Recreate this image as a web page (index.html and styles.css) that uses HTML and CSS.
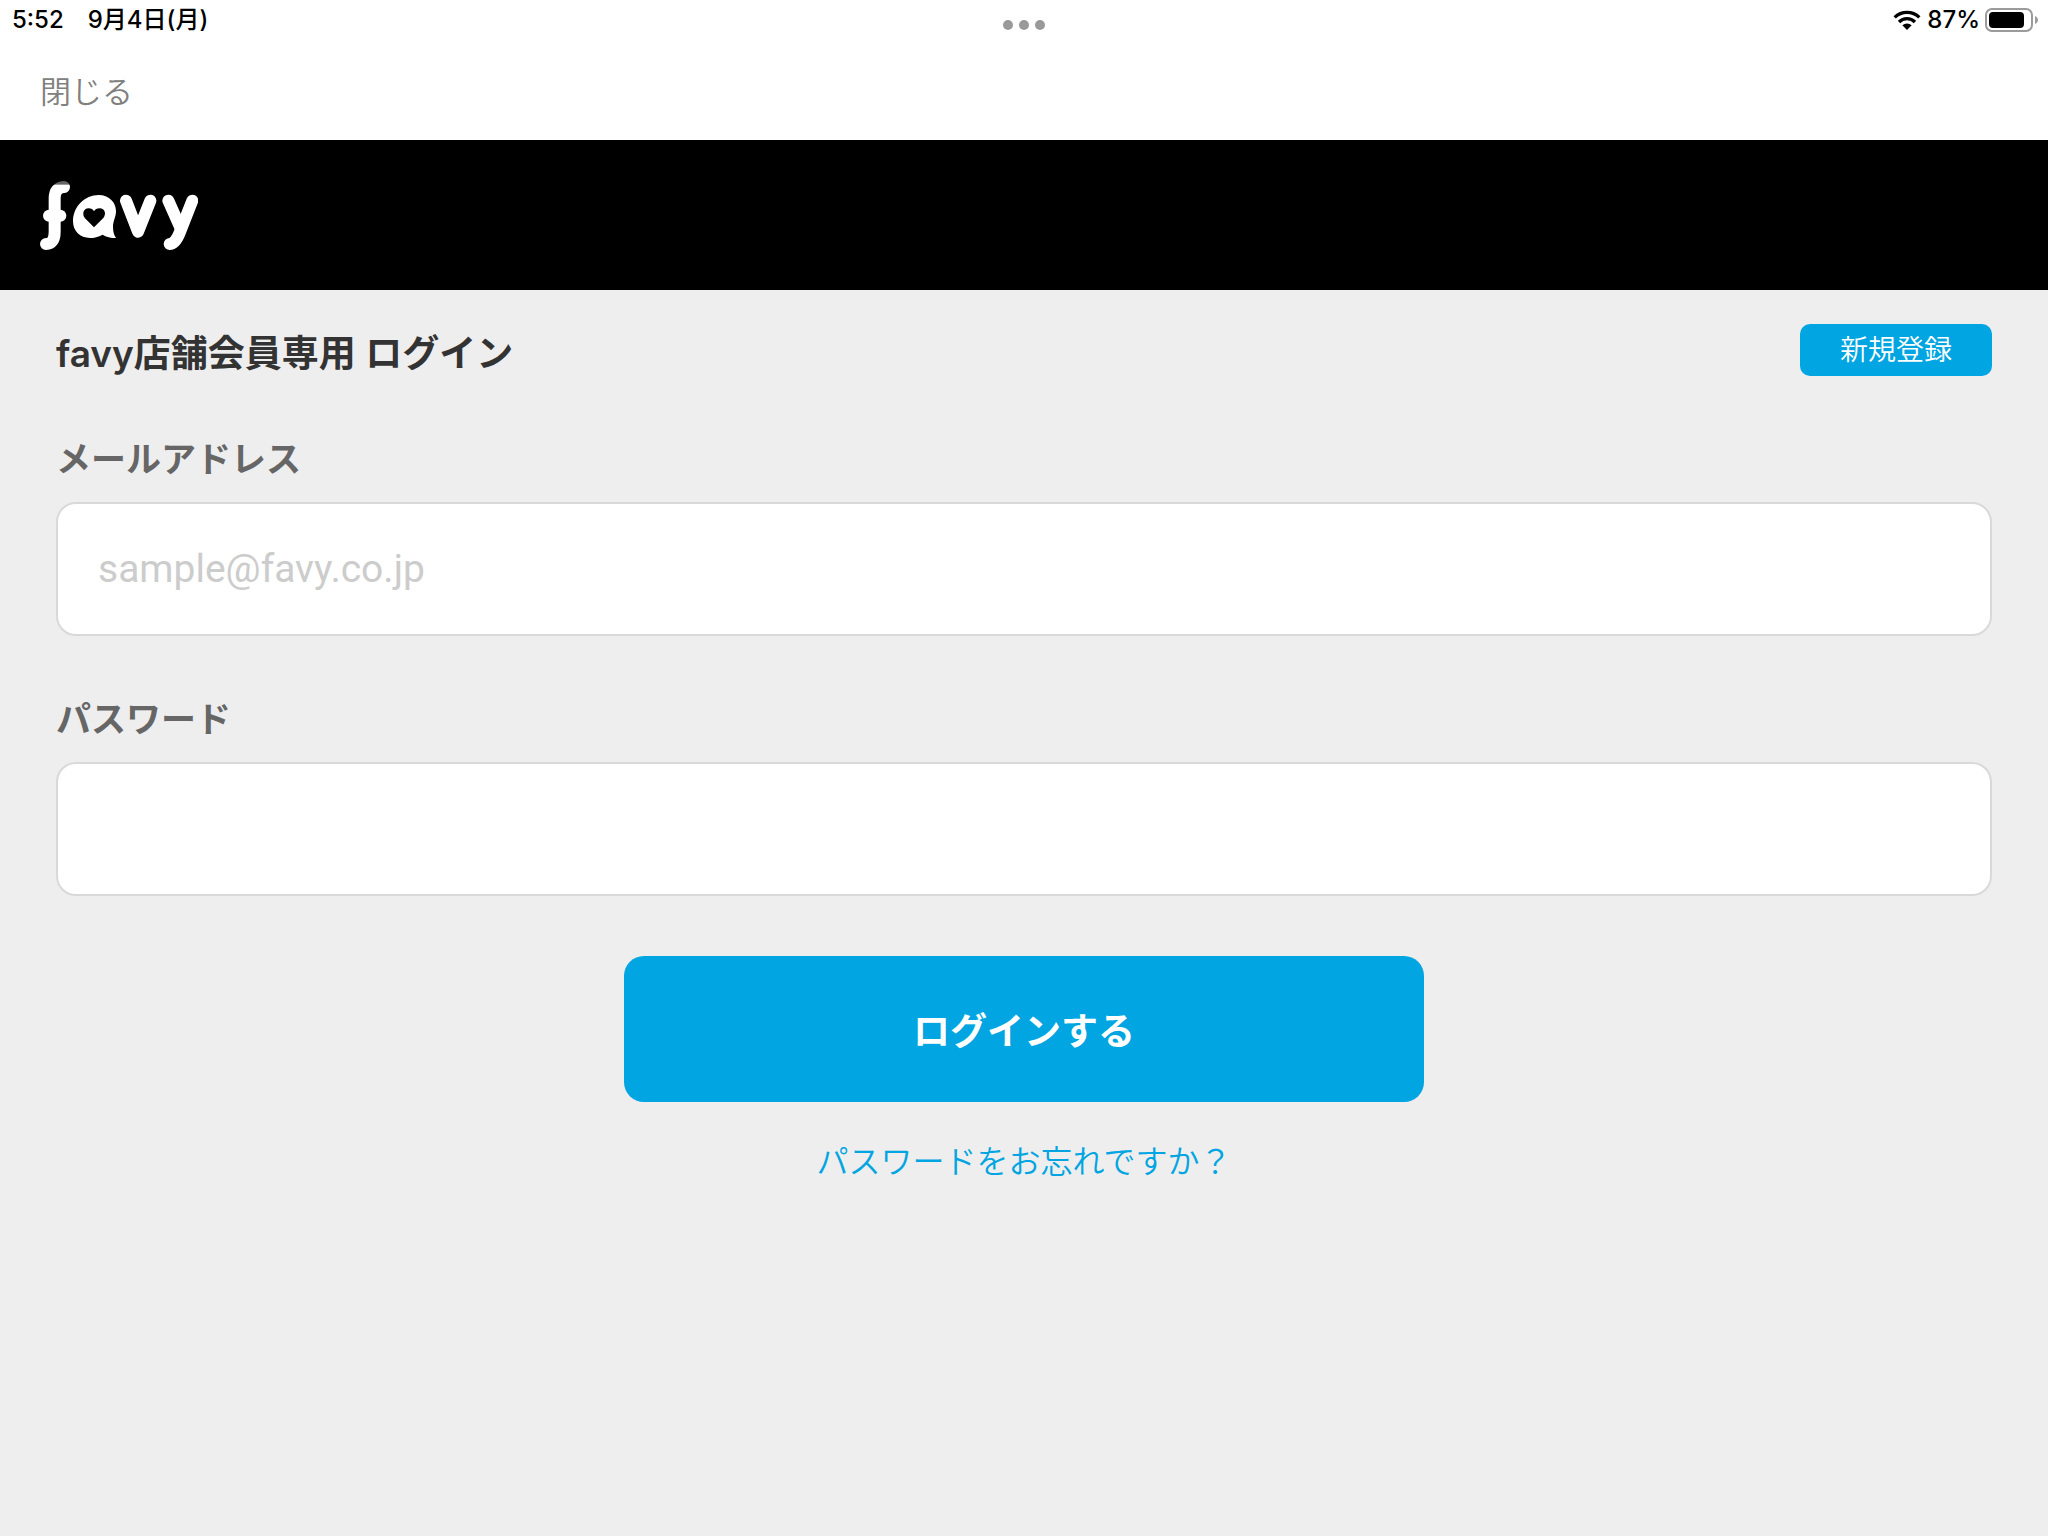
FILE: index.html
```
<!DOCTYPE html>
<html lang="ja">
<head>
    <meta charset="UTF-8">
    <meta name="viewport" content="width=device-width, initial-scale=1.0">
    <title>favy店舗会員専用 ログイン</title>
    <link rel="stylesheet" href="styles.css">
</head>
<body>
    <div class="status-bar">
        <div class="status-left">
            <span>5:52</span>
            <span>9月4日(月)</span>
        </div>
        <div class="status-dots">
            <span class="dot"></span>
            <span class="dot"></span>
            <span class="dot"></span>
        </div>
        <div class="status-right">
            <svg class="wifi" viewBox="0 0 82 60" aria-hidden="true">
                <g fill="none" stroke="#000" stroke-width="10">
                    <path d="M4 22 A53 53 0 0 1 78 22"/>
                    <path d="M17 36 A34 34 0 0 1 65 36"/>
                </g>
                <path d="M41 60 L27 46 A20 20 0 0 1 55 46 Z"/>
            </svg>
            <span>87%</span>
            <svg class="battery" viewBox="0 0 54 24" aria-hidden="true">
                <rect x="2" y="1" width="46" height="22" rx="6" fill="none" stroke="#9b9b9b" stroke-width="2"/>
                <rect x="5" y="4" width="35" height="16" rx="4"/>
                <path d="M51 8 C55 10 55 14 51 16 Z" fill="#9b9b9b"/>
            </svg>
        </div>
    </div>

    <nav class="nav-bar">
        <button type="button" class="close-button">閉じる</button>
    </nav>

    <header class="header">
        <svg class="logo" viewBox="60 60 474 207" role="img" aria-label="favy">
            <g fill="none" stroke="#fff" stroke-width="36" stroke-linecap="round" stroke-linejoin="round">
                <path d="M132 78 Q104 80 104 112 V212 Q104 249 78 249"/>
                <path d="M87 164 H121"/>
                <path d="M318 119 L354 212 L391 119"/>
                <path d="M445 119 L481 200"/>
                <path d="M517 119 L480 213 Q466 249 449 249"/>
            </g>
            <path fill="#fff" d="M236 102 C266 102 288 123 288 150 C288 168 279 180 279 197 C279 212 282 222 288 231 C272 231 258 228 248 221 C235 228 222 231 210 231 C180 231 159 210 159 181 C159 137 194 102 236 102 Z"/>
            <path d="M222 199 L195 172 C186 161 189 142 206 142 C214 142 219 146 222 151 C225 146 231 142 239 142 C255 142 260 160 250 171 Z"/>
            <rect x="60" y="58" width="100" height="13" fill="#000" opacity="0.6"/>
        </svg>
    </header>

    <main class="content">
        <div class="title-row">
            <h1>favy店舗会員専用 ログイン</h1>
            <a href="#" class="register-link">新規登録</a>
        </div>

        <form class="login-form">
            <label for="email">メールアドレス</label>
            <input type="email" id="email" placeholder="sample@favy.co.jp">

            <label for="password">パスワード</label>
            <input type="password" id="password">

            <button type="submit" class="login-button">ログインする</button>
        </form>

        <a href="#" class="forgot-link">パスワードをお忘れですか？</a>
    </main>
</body>
</html>
```
FILE: styles.css
```
* {
    margin: 0;
    padding: 0;
    box-sizing: border-box;
}

body {
    font-family: Inter, 'Noto Sans CJK JP', sans-serif;
    background: #eee;
    min-height: 100vh;
}

.status-bar {
    display: grid;
    grid-template-columns: 1fr auto 1fr;
    align-items: center;
    height: 40px;
    padding: 0 10px;
    background: #fff;
    color: #000;
    font-size: 24px;
    font-weight: 500;
    line-height: 40px;
}

.status-left {
    display: flex;
    gap: 24px;
    padding-left: 2px;
}

.status-dots {
    display: flex;
    gap: 6px;
    padding-top: 10px;
}

.dot {
    width: 10px;
    height: 10px;
    border-radius: 50%;
    background: #999;
}

.status-right {
    display: flex;
    align-items: center;
    justify-content: flex-end;
    gap: 4px;
}

.wifi {
    width: 28px;
    height: 20px;
    margin-right: 2px;
}

.battery {
    width: 54px;
    height: 24px;
}

.nav-bar {
    display: flex;
    align-items: center;
    height: 100px;
    padding: 0 40px 2px;
    background: #fff;
}

.close-button {
    border: none;
    background: none;
    color: #808080;
    font-family: inherit;
    font-size: 31px;
    font-weight: 350;
    cursor: pointer;
}

.header {
    display: flex;
    align-items: center;
    height: 150px;
    padding: 0 40px;
    background: #000;
}

.logo {
    width: 158px;
    height: 69px;
}

.content {
    display: flex;
    flex-direction: column;
    padding: 34px 56px;
}

.title-row {
    display: flex;
    align-items: flex-start;
    justify-content: space-between;
}

h1 {
    color: #333;
    font-size: 37px;
    font-weight: 600;
    line-height: 60px;
}

.register-link {
    width: 192px;
    border-radius: 10px;
    background: #00a5e1;
    color: #fff;
    font-size: 28px;
    font-weight: 350;
    line-height: 52px;
    text-align: center;
    text-decoration: none;
}

.login-form {
    display: flex;
    flex-direction: column;
    padding-top: 48px;
}

.login-form label {
    margin-bottom: 16px;
    color: #666;
    font-size: 35px;
    font-weight: 600;
    line-height: 54px;
}

.login-form input {
    width: 100%;
    height: 134px;
    margin-bottom: 56px;
    padding: 0 40px;
    border: 2px solid #d9d9d9;
    border-radius: 20px;
    background: #fff;
    font-family: Roboto, 'Noto Sans CJK JP', sans-serif;
    font-size: 39px;
}

.login-form input::placeholder {
    color: #ccc;
}

.login-button {
    align-self: center;
    width: 800px;
    max-width: 100%;
    height: 146px;
    margin-top: 4px;
    border: none;
    border-radius: 20px;
    background: #00a5e1;
    color: #fff;
    font-family: inherit;
    font-size: 37px;
    font-weight: 600;
    cursor: pointer;
}

.forgot-link {
    align-self: center;
    margin-top: 36px;
    color: #00a5e1;
    font-size: 32px;
    font-weight: 350;
    line-height: 48px;
    text-decoration: none;
}
```
